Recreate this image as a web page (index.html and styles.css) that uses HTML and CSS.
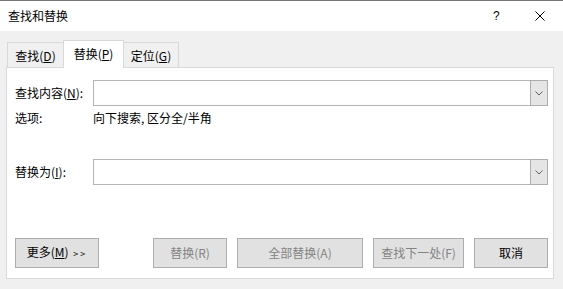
FILE: index.html
```html
<!DOCTYPE html>
<html lang="zh-CN">
<head>
<meta charset="utf-8">
<title>查找和替换</title>
<link rel="stylesheet" href="styles.css">
</head>
<body>
<div class="dialog">
  <div class="titlebar">
    <span class="title">查找和替换</span>
    <div class="controls">
      <span class="help">?</span>
      <svg class="close" width="10" height="10" viewBox="0 0 10 10"><path d="M0.5 0.5 L9.5 9.5 M9.5 0.5 L0.5 9.5" stroke="#000" stroke-width="1" fill="none"/></svg>
    </div>
  </div>
  <div class="content">
    <div class="tabs">
      <div class="tab tab-find">查找(<u>D</u>)</div>
      <div class="tab tab-replace active">替换(<u>P</u>)</div>
      <div class="tab tab-goto">定位(<u>G</u>)</div>
    </div>
    <div class="panel">
      <div class="row row-find">
        <label class="label">查找内容(<u>N</u>):</label>
        <div class="combo">
          <div class="combo-text"></div>
          <div class="combo-btn"><svg width="8" height="5" viewBox="0 0 8 5"><path d="M0.5 0.5 L4 4 L7.5 0.5" stroke="#606060" stroke-width="1" fill="none"/></svg></div>
        </div>
      </div>
      <div class="row row-options">
        <span class="label">选项:</span>
        <span class="value">向下搜索, 区分全/半角</span>
      </div>
      <div class="row row-replace">
        <label class="label">替换为(<u>I</u>):</label>
        <div class="combo">
          <div class="combo-text"></div>
          <div class="combo-btn"><svg width="8" height="5" viewBox="0 0 8 5"><path d="M0.5 0.5 L4 4 L7.5 0.5" stroke="#606060" stroke-width="1" fill="none"/></svg></div>
        </div>
      </div>
      <div class="buttons">
        <button class="btn btn-more">更多(<u>M</u>) <span class="arrows">&gt;&gt;</span></button>
        <div class="btn-group">
          <button class="btn btn-replace disabled">替换(R)</button>
          <button class="btn btn-all disabled">全部替换(A)</button>
          <button class="btn btn-next disabled">查找下一处(F)</button>
          <button class="btn btn-cancel">取消</button>
        </div>
      </div>
    </div>
  </div>
</div>
</body>
</html>
```

FILE: styles.css
```css
* { box-sizing: border-box; }
html, body { margin: 0; padding: 0; }
body {
  font-family: "Noto Sans CJK SC", "Noto Sans", sans-serif;
  font-size: 12px;
  color: #000;
  background: #f0f0f0;
}
u { text-underline-offset: 1px; }
.dialog {
  width: 563px;
  height: 289px;
  overflow: hidden;
  background: #f0f0f0;
}
.titlebar {
  height: 31px;
  border-top: 1px solid #777;
  background: #fff;
  display: flex;
  align-items: center;
  padding-left: 8px;
}
.title { font-size: 12px; line-height: 16px; }
.controls {
  margin-left: auto;
  display: flex;
  align-items: center;
  padding-right: 18px;
}
.help {
  font-family: "Liberation Sans", sans-serif;
  font-size: 12px;
  width: 6px;
  margin-right: 36px;
  line-height: 14px;
}
.close { display: block; }
.content {
  height: 258px;
  padding-top: 9px;
}
.tabs {
  display: flex;
  align-items: flex-end;
  height: 27px;
  margin-left: 7px;
}
.tab {
  height: 25px;
  border: 1px solid #d9d9d9;
  border-bottom: none;
  background: #f0f0f0;
  display: flex;
  align-items: center;
  justify-content: center;
  line-height: 16px;
  padding-top: 2px;
}
.tab-find { width: 56px; border-right: none; }
.tab-replace { width: 61px; }
.tab-goto { width: 55px; border-left: none; }
.tab.active {
  height: 28px;
  margin-bottom: -1px;
  background: #fff;
  position: relative;
  z-index: 1;
  padding-top: 0;
  padding-bottom: 1px;
}
.panel {
  margin-left: 6px;
  width: 548px;
  height: 212px;
  background: #fff;
  border: 1px solid #d9d9d9;
  padding: 12px 5px 0 8px;
}
.row { display: flex; align-items: center; }
.label { width: 78px; flex: none; line-height: 16px; }
.combo {
  flex: 1;
  height: 26px;
  border: 1px solid #b4b4b4;
  display: flex;
  background: #fff;
}
.combo-text { flex: 1; }
.combo-btn {
  width: 18px;
  margin: -1px -1px -1px 0;
  border: 1px solid #adadad;
  background: #e5e5e5;
  display: flex;
  align-items: center;
  justify-content: center;
}
.combo-btn svg { display: block; }
.row-options { height: 24px; }
.value { line-height: 16px; }
.row-replace { margin-top: 29px; }
.buttons {
  display: flex;
  margin-top: 53px;
}
.btn {
  font-family: inherit;
  font-size: 12px;
  height: 30px;
  margin: 0;
  padding: 0;
  border: 1px solid #adadad;
  background: #e1e1e1;
  color: #000;
  line-height: 16px;
}
.btn-more { width: 84px; }
.arrows { font-size: 9px; letter-spacing: 2px; margin-left: 2px; }
.btn-group {
  margin-left: auto;
  display: flex;
  gap: 10px;
}
.btn.disabled { color: #838383; }
.btn-replace { width: 74px; }
.btn-all { width: 126px; }
.btn-next { width: 91px; }
.btn-cancel { width: 74px; }
```
